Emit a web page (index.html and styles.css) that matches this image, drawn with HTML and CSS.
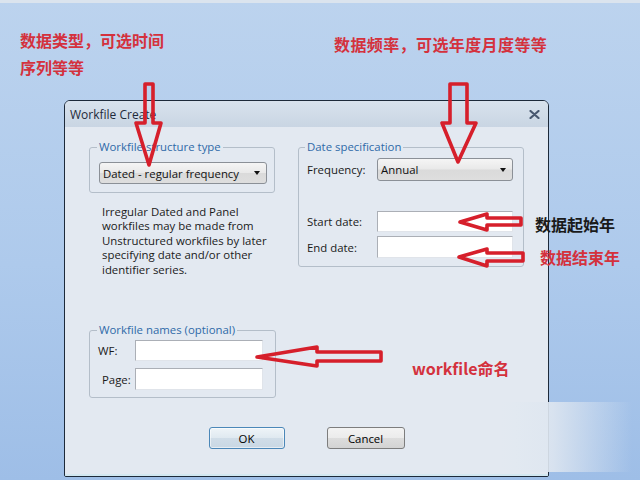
FILE: index.html
```html
<!DOCTYPE html>
<html lang="zh-CN">
<head>
<meta charset="utf-8">
<title>Workfile Create</title>
<link rel="stylesheet" href="styles.css">
</head>
<body>
<div class="desktop">
  <div class="dialog">
    <div class="titlebar">
      <span class="title">Workfile Create</span>
      <svg class="close" width="11" height="9" viewBox="0 0 11 9"><path d="M1.5 1 L9.5 8 M9.5 1 L1.5 8" stroke="#485870" stroke-width="2.2" stroke-linecap="round"/></svg>
    </div>
    <div class="client">
      <div class="columns">
        <div class="col-left">
          <fieldset class="group g-structure">
            <legend>Workfile structure type</legend>
            <div class="combo combo-structure"><span>Dated - regular frequency</span><i class="caret"></i></div>
          </fieldset>
          <p class="desc">Irregular Dated and Panel<br>workfiles may be made from<br>Unstructured workfiles by later<br>specifying date and/or other<br>identifier series.</p>
          <fieldset class="group g-names">
            <legend>Workfile names (optional)</legend>
            <div class="names-grid">
              <label class="lbl-wf">WF:</label><div class="edit edit-wf"></div>
              <label class="lbl-page">Page:</label><div class="edit edit-page"></div>
            </div>
          </fieldset>
        </div>
        <fieldset class="group g-date">
          <legend>Date specification</legend>
          <div class="date-grid">
            <label>Frequency:</label><div class="combo combo-freq"><span>Annual</span><i class="caret"></i></div>
            <label class="row-start">Start date:</label><div class="edit edit-start row-start"></div>
            <label class="row-end">End date:</label><div class="edit edit-end row-end"></div>
          </div>
        </fieldset>
      </div>
      <div class="buttons">
        <button class="btn btn-default">OK</button>
        <button class="btn btn-cancel">Cancel</button>
      </div>
    </div>
  </div>

  <div class="note note-type">数据类型，可选时间<br>序列等等</div>
  <div class="note note-freq">数据频率，可选年度月度等等</div>
  <div class="note note-start">数据起始年</div>
  <div class="note note-end">数据结束年</div>
  <div class="note note-name">workfile命名</div>

  <svg class="arrows" width="640" height="480" viewBox="0 0 640 480">
    <g fill="none" stroke="#d61f2b" stroke-width="3.6" stroke-linejoin="round">
      <path d="M145 84 H153 V123 H161 L149 165 L136 123 H145 Z"/>
      <path d="M450 84 H467 V123 H476 L458 162 L442 123 H450 Z"/>
      <path d="M460 222 L487 214 V218 H521 V225 H487 V230 Z"/>
      <path d="M459 257 L487 249 V253 H523 V261 H487 V266 Z"/>
      <path d="M257 357 L317 347 V352 H381 V361 H317 V366 Z"/>
    </g>
  </svg>

  <div class="wm"></div>
</div>
</body>
</html>
```

FILE: styles.css
```css
html, body {
  margin: 0;
  padding: 0;
}

body {
  width: 640px;
  height: 480px;
  overflow: hidden;
  font-family: "Open Sans", "Noto Sans", sans-serif;
  font-size: 11.4px;
  color: #1a1a1a;
}

.desktop {
  position: relative;
  width: 640px;
  height: 480px;
  background:
    linear-gradient(#dbe4ee, #dbe4ee) top left / 100% 3px no-repeat,
    linear-gradient(180deg, #bcd3ee 0%, #aecaec 55%, #9ebee7 100%);
}

/* ---------- dialog window ---------- */
.dialog {
  position: absolute;
  left: 64px;
  top: 100px;
  width: 485px;
  height: 377px;
  box-sizing: border-box;
  border: 1px solid #1d2a3a;
  border-radius: 6px 6px 2px 2px;
  background: #e3e9f1;
  display: flex;
  flex-direction: column;
  overflow: hidden;
}

.titlebar {
  flex: none;
  height: 26px;
  display: flex;
  align-items: center;
  justify-content: space-between;
  padding: 0 8px 0 5px;
  background: linear-gradient(180deg, #d8e2ed, #c9d5e3);
}

.title {
  font-size: 12px;
  color: #1e2a3a;
}

.close {
  display: block;
}

.client {
  flex: 1;
  padding-top: 13px;
  box-shadow: inset 0 -2px 0 #d3e8f1;
}

.columns {
  display: grid;
  grid-template-columns: 187px 226px;
  column-gap: 22px;
  align-items: start;
  padding-left: 24px;
}

/* ---------- group boxes ---------- */
.group {
  margin: 0;
  min-width: 0;
  box-sizing: border-box;
  border: 1px solid #b4bec9;
  border-radius: 3px;
}

.group legend {
  padding: 0 2px;
  margin-left: -2px;
  line-height: 14px;
  color: #2f6aa8;
}

.g-structure {
  width: 186px;
  padding: 0 7px 8px 9px;
}

.g-names {
  width: 187px;
  margin-top: 46px;
  padding: 0 0 7px 0;
}

.g-names legend {
  margin-left: 7px;
}

.g-date {
  width: 226px;
  padding: 0 9px 8px 8px;
}

/* ---------- combo boxes ---------- */
.combo {
  box-sizing: border-box;
  height: 22px;
  border: 1px solid #8b9097;
  border-radius: 3px;
  background: linear-gradient(180deg, #f5f5f5 0%, #e9e9e9 48%, #dadada 52%, #dedede 100%);
  display: flex;
  align-items: center;
  justify-content: space-between;
  padding: 0 6px 0 3px;
  color: #111;
}

.combo-structure {
  width: 168px;
  margin-top: 8px;
}

.combo-freq {
  height: 23px;
}

.caret {
  width: 0;
  height: 0;
  border-left: 3.5px solid transparent;
  border-right: 3.5px solid transparent;
  border-top: 4px solid #111;
}

/* ---------- text ---------- */
.desc {
  margin: 12px 0 0;
  padding-left: 13px;
  line-height: 14.4px;
}

/* ---------- edits ---------- */
.edit {
  box-sizing: border-box;
  background: #fff;
  border: 1px solid #e0e4ea;
  border-top-color: #abafb6;
  border-left-color: #abafb6;
}

.names-grid {
  display: grid;
  grid-template-columns: 45px 128px;
  row-gap: 7px;
  margin-top: 3px;
  align-items: center;
}

.lbl-wf {
  padding-left: 8px;
}

.lbl-page {
  padding-left: 12px;
}

.edit-wf {
  height: 21px;
}

.edit-page {
  height: 22px;
}

.date-grid {
  display: grid;
  grid-template-columns: 70px 136px;
  margin-top: 4px;
  align-items: center;
}

.row-start {
  margin-top: 30px;
}

.row-end {
  margin-top: 4px;
}

.edit-start {
  height: 21px;
}

.edit-end {
  height: 22px;
}

/* ---------- buttons ---------- */
.buttons {
  display: flex;
  justify-content: center;
  gap: 42px;
  margin-top: 29px;
}

.btn {
  box-sizing: border-box;
  height: 22px;
  padding: 0;
  font: inherit;
  color: #000;
  border-radius: 3px;
  border: 1px solid #7d7d7d;
  background: linear-gradient(180deg, #f3f3f3 0%, #ebebeb 50%, #dddddd 51%, #d3d3d3 100%);
}

.btn-default {
  width: 76px;
  border-color: #4b87b8;
  background: linear-gradient(180deg, #eef4f8 0%, #dfe9f0 50%, #d0dde8 51%, #c9d8e4 100%);
  box-shadow: inset 0 0 0 1px rgba(255, 255, 255, 0.55);
}

.btn-cancel {
  width: 78px;
}

/* ---------- annotations ---------- */
.note {
  position: absolute;
  font-family: "Noto Sans CJK SC", "Noto Sans", sans-serif;
  font-weight: 700;
  font-size: 16px;
  line-height: 20px;
  color: #d4313d;
  white-space: nowrap;
}

.note-type {
  left: 20px;
  top: 27px;
  line-height: 27px;
}

.note-freq {
  left: 334px;
  top: 34px;
  letter-spacing: 0.4px;
}

.note-start {
  left: 535px;
  top: 214px;
  color: #1a1a1a;
}

.note-end {
  left: 540px;
  top: 247px;
}

.note-name {
  left: 412px;
  top: 358px;
}

.arrows {
  position: absolute;
  left: 0;
  top: 0;
  pointer-events: none;
}

.wm {
  position: absolute;
  left: 500px;
  top: 402px;
  width: 132px;
  height: 70px;
  background: linear-gradient(90deg, rgba(226, 233, 241, 0) 0%, #e2e9f1 12%, rgba(222, 230, 240, 0.9) 40%, rgba(214, 225, 240, 0) 100%);
}
```
